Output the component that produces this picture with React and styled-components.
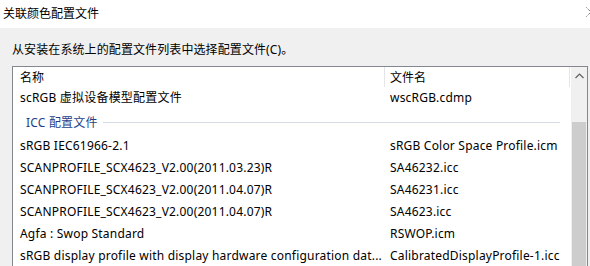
import React from "react";
import styled, { createGlobalStyle } from "styled-components";

const Global = createGlobalStyle`
  html, body { margin: 0; padding: 0; }
  body {
    width: 590px; height: 266px; overflow: hidden;
    background: #f0f0f0;
    font-family: "Noto Sans", "Noto Sans CJK SC", sans-serif;
    font-size: 12px; color: #000;
  }
`;

const Window = styled.div`
  width: 590px; height: 266px; overflow: hidden;
  display: flex; flex-direction: column;
`;

const TitleBar = styled.div`
  height: 28px; background: #fff; flex: none;
  display: flex; align-items: center; justify-content: space-between;
  padding-left: 3px; padding-bottom: 1px; box-sizing: border-box;
  overflow: hidden;
`;

const Title = styled.span`
  font-size: 12px; line-height: 16px; color: #000;
`;

const CloseIcon = styled.svg`
  flex: none; margin-right: -6px; margin-top: -4px;
`;

const Body = styled.div`
  flex: 1; padding: 12px 2px 0 12px; display: flex; flex-direction: column;
`;

const Label = styled.div`
  height: 20px; line-height: 20px; margin-bottom: 6px; letter-spacing: 0.1px;
`;

const ListBox = styled.div`
  flex: 1; border: 1px solid #828790; border-bottom: none; background: #fff;
  display: flex; overflow: hidden;
`;

const Main = styled.div`
  width: 558px; flex: none; display: flex; flex-direction: column;
`;

const HeaderRow = styled.div`
  display: flex; height: 20px; flex: none;
`;

const HeaderCell = styled.div`
  width: ${(p) => p.$w}px; flex: none; box-sizing: border-box;
  border-right: 1px solid #e5e5e5;
  padding-left: ${(p) => p.$pad}px; line-height: 22px; white-space: nowrap;
`;

const Row = styled.div`
  display: flex; height: 22px; flex: none; align-items: center;
`;

const Cell = styled.div`
  width: ${(p) => p.$w}px; flex: none; box-sizing: border-box;
  padding-left: ${(p) => p.$pad}px; white-space: nowrap; overflow: hidden;
  line-height: 22px; letter-spacing: 0.2px;
`;

const Group = styled.div`
  height: 26px; flex: none; display: flex; align-items: center;
  padding-left: 13px; padding-right: 11px; gap: 5px;
`;

const GroupLabel = styled.span`
  color: #1e3f8a; white-space: nowrap; letter-spacing: 0.2px;
`;

const GroupLine = styled.div`
  flex: 1; height: 1px; background: #d6dce4;
`;

const ScrollBar = styled.div`
  width: 16px; flex: none; background: #f0f0f0; display: flex; flex-direction: column;
`;

const ArrowButton = styled.div`
  height: 17px; display: flex; align-items: center; justify-content: center;
`;

const Track = styled.div`
  flex: 1; display: flex; flex-direction: column; padding: 0 1px;
`;

const Thumb = styled.div`
  margin-top: 38px; flex: 1; background: #cdcdcd;
`;

const NAME_W = 372;
const FILE_W = 185;

const rows = [
  ["sRGB IEC61966-2.1", "sRGB Color Space Profile.icm"],
  ["SCANPROFILE_SCX4623_V2.00(2011.03.23)R", "SA46232.icc"],
  ["SCANPROFILE_SCX4623_V2.00(2011.04.07)R", "SA46231.icc"],
  ["SCANPROFILE_SCX4623_V2.00(2011.04.07)R", "SA4623.icc"],
  ["Agfa : Swop Standard", "RSWOP.icm"],
  ["sRGB display profile with display hardware configuration dat...", "CalibratedDisplayProfile-1.icc"],
];

export default function App() {
  return (
    <>
      <Global />
      <Window>
        <TitleBar>
          <Title>关联颜色配置文件</Title>
          <CloseIcon width="10" height="10" viewBox="0 0 10 10">
            <path d="M0.5 0.5 L9.5 9.5 M9.5 0.5 L0.5 9.5" stroke="#444" strokeWidth="1" strokeDasharray="1 1" />
          </CloseIcon>
        </TitleBar>
        <Body>
          <Label>从安装在系统上的配置文件列表中选择配置文件(C)。</Label>
          <ListBox>
            <Main>
              <HeaderRow>
                <HeaderCell $w={NAME_W} $pad={7}>名称</HeaderCell>
                <HeaderCell $w={FILE_W} $pad={5}>文件名</HeaderCell>
              </HeaderRow>
              <Row>
                <Cell $w={NAME_W} $pad={7}>scRGB 虚拟设备模型配置文件</Cell>
                <Cell $w={FILE_W} $pad={5}>wscRGB.cdmp</Cell>
              </Row>
              <Group>
                <GroupLabel>ICC 配置文件</GroupLabel>
                <GroupLine />
              </Group>
              {rows.map(([n, f], i) => (
                <Row key={i}>
                  <Cell $w={NAME_W} $pad={7}>{n}</Cell>
                  <Cell $w={FILE_W} $pad={5}>{f}</Cell>
                </Row>
              ))}
            </Main>
            <ScrollBar>
              <ArrowButton>
                <svg width="9" height="6" viewBox="0 0 9 6">
                  <path d="M0.5 5 L4.5 1 L8.5 5" fill="none" stroke="#606060" strokeWidth="1.2" />
                </svg>
              </ArrowButton>
              <Track>
                <Thumb />
              </Track>
            </ScrollBar>
          </ListBox>
        </Body>
      </Window>
    </>
  );
}
